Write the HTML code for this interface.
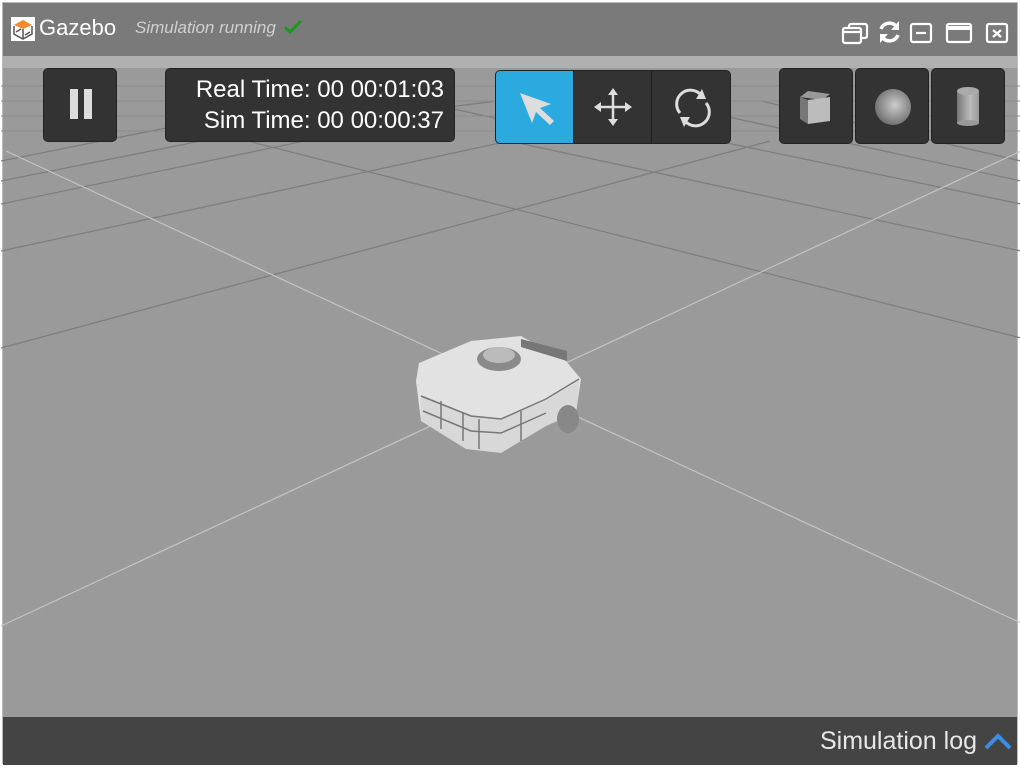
<!DOCTYPE html>
<html><head><style>
*{margin:0;padding:0;box-sizing:border-box}
body{width:1020px;height:768px;background:#fff;font-family:"Liberation Sans",sans-serif;position:relative;overflow:hidden}
#win{position:absolute;left:2px;top:2px;width:1016px;height:762px;background:#9a9a9a;border:1px solid #bbb}
#title{position:absolute;left:0;top:0;width:100%;height:53px;background:#7a7a7a}
#band{position:absolute;left:0;top:53px;width:100%;height:12px;background:#b0b0b0}
.btn{position:absolute;background:#333;border:1px solid #222;border-radius:5px}
#bottom{position:absolute;left:0;top:714px;width:100%;height:48px;background:#444;color:#e8e8e8;font-size:25px}
</style></head><body>
<div id="win">
<svg style="position:absolute;left:-2px;top:-2px" width="1020" height="768">
<g stroke="#7e7e7e" stroke-width="1.3" fill="none">
<line x1="0" y1="347" x2="769" y2="140"/>
<line x1="0" y1="250" x2="508" y2="140"/>
<line x1="0" y1="203" x2="400" y2="120"/>
<line x1="0" y1="180" x2="350" y2="110"/>
<line x1="0" y1="160" x2="300" y2="100"/>
<line x1="1020" y1="337" x2="247" y2="140"/>
<line x1="1020" y1="250" x2="508" y2="140"/>
<line x1="1020" y1="203" x2="620" y2="120"/>
<line x1="1020" y1="180" x2="700" y2="110"/>
<line x1="1020" y1="160" x2="760" y2="100"/>
<line x1="170" y1="140" x2="700" y2="75"/>
<line x1="600" y1="140" x2="300" y2="75"/>
<line x1="0" y1="130" x2="1020" y2="130" stroke="#8c8c8c" stroke-width="1"/>
<line x1="0" y1="115" x2="1020" y2="115" stroke="#8c8c8c" stroke-width="1"/>
<line x1="0" y1="100" x2="1020" y2="100" stroke="#8c8c8c" stroke-width="1"/>
<line x1="0" y1="85" x2="1020" y2="85" stroke="#8c8c8c" stroke-width="1"/>
</g>
<g stroke="#c4c4c4" stroke-width="1.2">
<line x1="5" y1="150" x2="1020" y2="622"/>
<line x1="0" y1="625" x2="1020" y2="150"/>
</g>
<g>
<polygon points="418,362 470,340 520,335 565,360 580,378 575,412 545,420 500,450 470,448 420,420 415,380" fill="#e2e2e2"/>
<polygon points="420,395 470,415 500,418 545,400 578,380 575,412 545,425 500,452 465,448 420,420" fill="#d8d8d8"/>
<g stroke="#777" stroke-width="1.5" fill="none">
<path d="M420,395 L470,415 L500,418 L545,398 L578,378"/>
<path d="M422,410 L470,430 L500,432 L545,412"/>
<line x1="440" y1="400" x2="440" y2="428"/><line x1="462" y1="412" x2="462" y2="440"/><line x1="478" y1="418" x2="478" y2="448"/><line x1="520" y1="410" x2="520" y2="440"/>
</g>
<ellipse cx="498" cy="358" rx="22" ry="12" fill="#8a8a8a"/>
<ellipse cx="498" cy="354" rx="16" ry="8" fill="#bbb"/>
<polygon points="520,338 566,350 566,360 520,346" fill="#777"/>
<ellipse cx="567" cy="418" rx="11" ry="14" fill="#888"/>
</g>
</svg>
<div id="title">
<svg style="position:absolute;left:8px;top:14px" width="24" height="24" viewBox="0 0 24 24"><rect width="24" height="24" fill="#fff"/><polygon points="12,3 21,8 12,12 3,8" fill="#f08a2c"/><path d="M3,9 L3,17 L12,22 L21,17 L21,9 M12,12 L12,22 M5,15 L10,12 M14,18 L19,15" stroke="#555" stroke-width="1.5" fill="none"/></svg>
<div style="position:absolute;left:36px;top:12px;color:#fff;font-size:22px">Gazebo</div>
<div style="position:absolute;left:132px;top:15px;color:#d0d0d0;font-size:17px;font-style:italic">Simulation running</div>
<svg style="position:absolute;left:280px;top:16px" width="20" height="16"><path d="M2,8 L7,13 L18,2" stroke="#1a9a1a" stroke-width="3" fill="none"/></svg>
<svg style="position:absolute;left:838px;top:16px" width="180" height="26" fill="none" stroke="#fff" stroke-width="2.2">
<rect x="8" y="5" width="18" height="14" rx="2"/><rect x="2" y="9" width="18" height="15" rx="2" fill="#7a7a7a"/><line x1="2" y1="13" x2="20" y2="13"/>
<path d="M40,10 A9,9 0 0 1 55,7 M57,16 A9,9 0 0 1 42,19" stroke-width="3.5"/><polygon points="58,2 58,11 50,11" fill="#fff" stroke="none"/><polygon points="39,24 39,15 47,15" fill="#fff" stroke="none"/>
<rect x="70" y="5" width="20" height="18" rx="2"/><line x1="75" y1="14" x2="85" y2="14"/>
<rect x="106" y="5" width="24" height="18" rx="2"/><line x1="106" y1="9" x2="130" y2="9" stroke-width="4"/>
<rect x="146" y="5" width="20" height="18" rx="2"/><path d="M152,11 L160,18 M160,11 L152,18"/>
</svg>
</div>
<div id="band"></div>
<div class="btn" style="left:40px;top:65px;width:74px;height:74px"><div style="position:absolute;left:26px;top:20px;width:8px;height:30px;background:#ddd"></div><div style="position:absolute;left:40px;top:20px;width:8px;height:30px;background:#ddd"></div></div>
<div class="btn" style="left:162px;top:65px;width:290px;height:74px;color:#fff;font-size:24px;text-align:right;padding:5px 10px 0 0;line-height:31px">Real Time: 00 00:01:03<br>Sim Time: 00 00:00:37</div>
<div class="btn" style="left:492px;top:67px;width:236px;height:74px;overflow:hidden">
<div style="position:absolute;left:0;top:0;width:77px;height:74px;background:#2aaadf"></div>
<div style="position:absolute;left:77px;top:0;width:1px;height:74px;background:#1e1e1e"></div>
<div style="position:absolute;left:155px;top:0;width:1px;height:74px;background:#1e1e1e"></div>
<svg style="position:absolute;left:0;top:0" width="236" height="74"><polygon points="24,22 55,33 44,37 58,50 54,54 40,41 36,52" fill="#ddd"/>
<g stroke="#ddd" stroke-width="2.5" fill="#ddd"><line x1="117" y1="20" x2="117" y2="52"/><line x1="101" y1="36" x2="133" y2="36"/>
<polygon points="117,17 112,24 122,24" stroke="none"/><polygon points="117,55 112,48 122,48" stroke="none"/><polygon points="98,36 105,31 105,41" stroke="none"/><polygon points="136,36 129,31 129,41" stroke="none"/></g>
<g stroke="#ddd" stroke-width="3" fill="none"><path d="M184,42 A13,13 0 0 1 205,24"/><path d="M210,32 A13,13 0 0 1 189,50"/></g>
<polygon points="206,18 210,28 200,28" fill="#ddd"/><polygon points="188,56 184,46 194,46" fill="#ddd"/></svg>
</div>
<div class="btn" style="left:776px;top:65px;width:74px;height:76px"><svg width="74" height="76"><polygon points="20,28 28,22 50,25 42,31" fill="#999"/><polygon points="20,28 28,31 28,55 20,50" fill="#777"/><polygon points="28,31 50,28 50,52 28,55" fill="#bcbcbc"/></svg></div>
<div class="btn" style="left:852px;top:65px;width:74px;height:76px"><svg width="74" height="76"><defs><radialGradient id="g" cx="0.55" cy="0.45" r="0.6"><stop offset="0" stop-color="#ccc"/><stop offset="1" stop-color="#6a6a6a"/></radialGradient></defs><circle cx="37" cy="38" r="18" fill="url(#g)"/></svg></div>
<div class="btn" style="left:928px;top:65px;width:74px;height:76px"><svg width="74" height="76"><defs><linearGradient id="c"><stop offset="0" stop-color="#777"/><stop offset="0.6" stop-color="#bbb"/><stop offset="1" stop-color="#999"/></linearGradient></defs><rect x="25" y="22" width="22" height="32" fill="url(#c)"/><ellipse cx="36" cy="54" rx="11" ry="3" fill="#999"/><ellipse cx="36" cy="22" rx="11" ry="4" fill="#aaa"/></svg></div>
<div id="bottom"><span style="position:absolute;right:40px;top:10px">Simulation log</span>
<svg style="position:absolute;right:4px;top:14px" width="30" height="20"><path d="M3,17 L15,5 L27,17" stroke="#3a8ee6" stroke-width="4" fill="none"/></svg></div>
</div>
</body></html>
